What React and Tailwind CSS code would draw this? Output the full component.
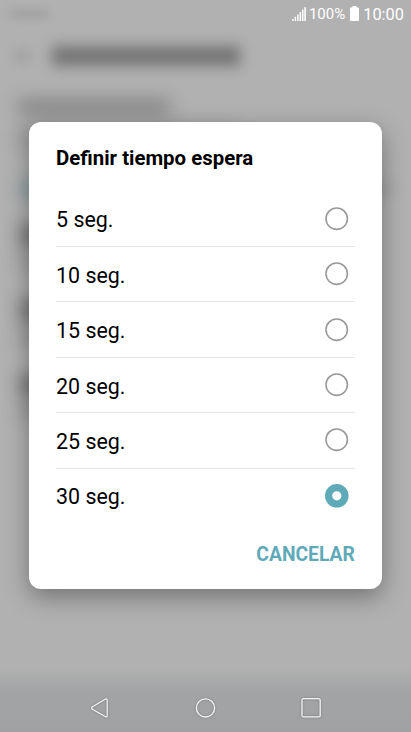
import React from "react";

const options = ["5 seg.", "10 seg.", "15 seg.", "20 seg.", "25 seg.", "30 seg."];

function StatusBar() {
  return (
    <div className="flex h-7 items-center justify-end pr-[7px] text-white">
      <svg className="mr-[3px] h-[14px] w-[14px]" viewBox="0 0 14 14" fill="#fff">
        <rect x="0.2" y="12" width="1.4" height="2" />
        <rect x="2.7" y="9.8" width="1.4" height="4.2" />
        <rect x="5.2" y="7.4" width="1.4" height="6.6" />
        <rect x="7.6" y="5" width="1.5" height="9" />
        <rect x="10" y="2.6" width="1.5" height="11.4" />
        <rect x="12.3" y="0.2" width="1.6" height="13.8" />
      </svg>
      <span className="text-[15px] leading-7">100%</span>
      <svg className="mr-[4px] mb-px ml-[5px] h-[15px] w-[9px]" viewBox="0 0 9 15" fill="#fff">
        <path d="M2.500 0h4v1.500H8a1 1 0 0 1 1 1V14a1 1 0 0 1-1 1H1a1 1 0 0 1-1-1V2.500a1 1 0 0 1 1-1h1.500z" />
      </svg>
      <span className="pt-px text-[16.400px] leading-7">10:00</span>
    </div>
  );
}

function BlurredScreen() {
  return (
    <div className="absolute inset-0 flex flex-col overflow-hidden">
      <div className="flex h-7 items-center pl-[10px]">
        <div className="h-[6px] w-[38px] bg-black/13 blur-[5px]" />
      </div>
      <div className="flex h-14 items-center gap-[22px] pl-[14px]">
        <div className="h-[14px] w-[16px] bg-black/8 blur-[6px]" />
        <div className="h-[20px] w-[188px] bg-black/34 blur-[7px]" />
      </div>
      <div className="flex flex-col gap-[14px] px-[18px] pt-[15px]">
        <div className="h-[16px] w-[152px] bg-black/25 blur-[9px]" />
        <div className="h-[14px] w-[220px] bg-black/18 blur-[9px]" />
      </div>
      <div className="flex flex-col gap-[26px] px-[21px] pt-[39px]">
        <div className="h-[14px] w-full bg-gradient-to-r from-[#2f7280]/40 via-black/10 via-40% to-black/10 blur-[8px]" />
        {[0, 1, 2].map((row) => (
          <div key={row} className="flex h-[49px] flex-col justify-center gap-[10px]">
            <div className="h-[18px] w-[140px] bg-black/42 blur-[9px]" />
            <div className="h-[14px] w-[220px] bg-black/18 blur-[9px]" />
          </div>
        ))}
      </div>
    </div>
  );
}

function Radio({ checked }) {
  return (
    <svg className="mr-[6px] h-6 w-6" viewBox="0 0 24 24" fill="none">
      {checked ? (
        <circle cx="11.800" cy="11.800" r="8.200" stroke="#5faab9" strokeWidth="7.200" />
      ) : (
        <circle cx="11.700" cy="11.700" r="10.700" stroke="#999" strokeWidth="1.600" />
      )}
    </svg>
  );
}

function NavBar() {
  return (
    <div className="flex h-[64px] items-center justify-center gap-[82px] bg-gradient-to-b from-[#b1b1b1] via-[#a3a4a6] via-35% to-[#a0a1a3] pt-4">
      <svg className="h-6 w-6 drop-shadow-[0_0_1px_rgba(0,0,0,0.3)]" viewBox="0 0 24 24" fill="none" stroke="#f4f4f4" strokeWidth="1.200">
        <path d="M19.200 4.100V19.800Q19.200 21.600 17.600 20.700L4.400 13.200Q2.700 12 4.400 10.800L17.600 3.100Q19.200 2.300 19.200 4.100Z" />
      </svg>
      <svg className="h-6 w-6 drop-shadow-[0_0_1px_rgba(0,0,0,0.3)]" viewBox="0 0 24 24" fill="none" stroke="#f4f4f4" strokeWidth="1.300">
        <circle cx="11.500" cy="11.900" r="9.100" />
      </svg>
      <svg className="h-6 w-6 drop-shadow-[0_0_1px_rgba(0,0,0,0.3)]" viewBox="0 0 24 24" fill="none" stroke="#f4f4f4" strokeWidth="1.300">
        <rect x="2" y="2.700" width="18.200" height="18.200" rx="1.500" />
      </svg>
    </div>
  );
}

function TimeoutDialog() {
  return (
    <div className="flex h-[467.300px] w-[353.800px] flex-col rounded-[12px] bg-white px-[27.500px] pt-[22px] text-black shadow-[0_8px_24px_rgba(0,0,0,0.35)]">
      <h1 className="h-[28px] text-[20.400px] leading-[28px] font-bold whitespace-nowrap">Definir tiempo espera</h1>
      <ul className="pt-[19.500px]">
        {options.map((label, i) => (
          <li
            key={label}
            className="flex h-[55.440px] items-center justify-between border-b border-[#e6e6e6] text-[21.400px] last:border-transparent"
          >
            <span className="pt-[3px] leading-7">{label}</span>
            <Radio checked={i === 5} />
          </li>
        ))}
      </ul>
      <button className="self-end pt-[17px] text-[19.300px] leading-7 font-bold text-[#5faab9]">CANCELAR</button>
    </div>
  );
}

export default function App() {
  return (
    <div className="relative isolate h-[732px] w-[411px] overflow-hidden bg-[#b1b1b1] font-['Roboto',sans-serif]">
      <BlurredScreen />
      <div className="relative flex h-full flex-col">
        <StatusBar />
        <main className="flex grow items-start justify-center pt-[94px]">
          <TimeoutDialog />
        </main>
        <NavBar />
      </div>
    </div>
  );
}
